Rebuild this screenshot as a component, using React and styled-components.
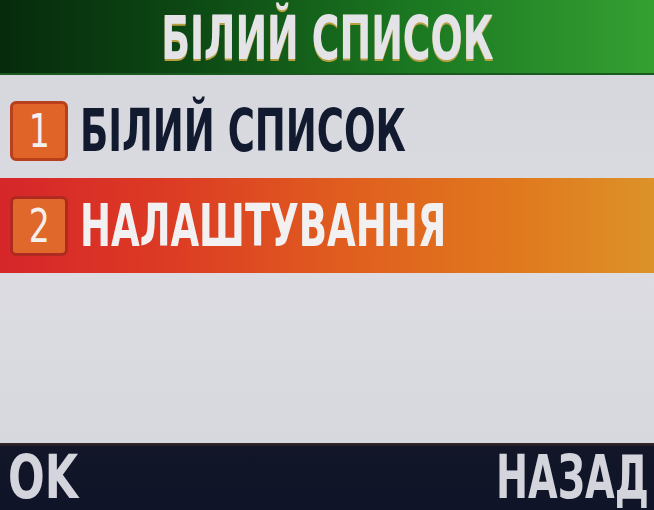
import React from "react";
import styled, { createGlobalStyle } from "styled-components";

const Global = createGlobalStyle`
  html, body { margin: 0; padding: 0; background: #d8d8de; }
  body { width: 654px; height: 510px; overflow: hidden; font-family: "DejaVu Sans Condensed", "DejaVu Sans", sans-serif; }
`;

const Screen = styled.div`
  width: 654px;
  height: 510px;
  display: flex;
  flex-direction: column;
  background: linear-gradient(180deg, #d4d4dc 0%, #dcdce2 50%, #d6d6de 100%);
  overflow: hidden;
`;

const Header = styled.div`
  height: 75px;
  flex: none;
  display: flex;
  align-items: center;
  justify-content: center;
  background: linear-gradient(90deg, #062a0c 0%, #0d4a14 30%, #1c7a22 65%, #35a032 100%);
  box-shadow: inset 0 -2px 0 #1a5a20;
`;

const Text = styled.span`
  display: inline-block;
  font-family: "DejaVu Sans Condensed", "DejaVu Sans", sans-serif;
  font-weight: bold;
  text-transform: uppercase;
  white-space: nowrap;
  font-size: ${(p) => p.$size || 58}px;
  line-height: 1;
  color: ${(p) => p.$color};
  transform: scaleX(${(p) => p.$sx || 0.71});
  transform-origin: ${(p) => p.$origin || "left"} center;
  text-shadow: ${(p) => p.$shadow || "none"};
`;

const List = styled.div`
  flex: 1;
  display: flex;
  flex-direction: column;
  padding-top: 8px;
`;

const Row = styled.div`
  height: 95px;
  display: flex;
  align-items: center;
  gap: 12px;
  padding-left: 10px;
  background: ${(p) =>
    p.$active
      ? "linear-gradient(90deg, #d6262a 0%, #dc3a24 25%, #e0601e 55%, #e07a1e 80%, #dc9228 100%)"
      : "transparent"};
`;

const Badge = styled.div`
  width: 52px;
  height: 54px;
  flex: none;
  box-sizing: content-box;
  border: 3px solid ${(p) => (p.$active ? "#b02a20" : "#b8401c")};
  border-radius: 6px;
  background: ${(p) => (p.$active ? "#e0682a" : "#e06428")};
  display: flex;
  align-items: center;
  justify-content: center;
  color: #f4f0ee;
  font-family: "DejaVu Sans Condensed", "DejaVu Sans", sans-serif;
  font-size: 46px;
  line-height: 1;
`;

const Num = styled.span`
  display: inline-block;
  transform: scaleX(0.8);
`;

const Footer = styled.div`
  height: 67px;
  flex: none;
  display: flex;
  align-items: center;
  justify-content: space-between;
  padding: 0 8px;
  background: linear-gradient(180deg, #3a2a28 0%, #121628 6%, #0f1428 100%);
`;

const RightSoft = styled.div`
  width: 150px;
  display: flex;
  justify-content: flex-start;
`;

const LeftSoft = styled.div`
  width: 150px;
`;

export default function App() {
  return (
    <>
      <Global />
      <Screen>
        <Header>
          <Text $color="#e4e4e8" $origin="center" $size={60} $sx={0.7} $shadow="0 2px 0 #b8a040">
            Білий список
          </Text>
        </Header>
        <List>
          <Row>
            <Badge>
              <Num>1</Num>
            </Badge>
            <Text $color="#121a30">Білий список</Text>
          </Row>
          <Row $active>
            <Badge $active>
              <Num>2</Num>
            </Badge>
            <Text $color="#f2f0f0">Налаштування</Text>
          </Row>
        </List>
        <Footer>
          <LeftSoft>
            <Text $color="#d4d4dc" $size={60} $sx={0.8}>OK</Text>
          </LeftSoft>
          <RightSoft>
            <Text $color="#d4d4dc" $size={60}>Назад</Text>
          </RightSoft>
        </Footer>
      </Screen>
    </>
  );
}
